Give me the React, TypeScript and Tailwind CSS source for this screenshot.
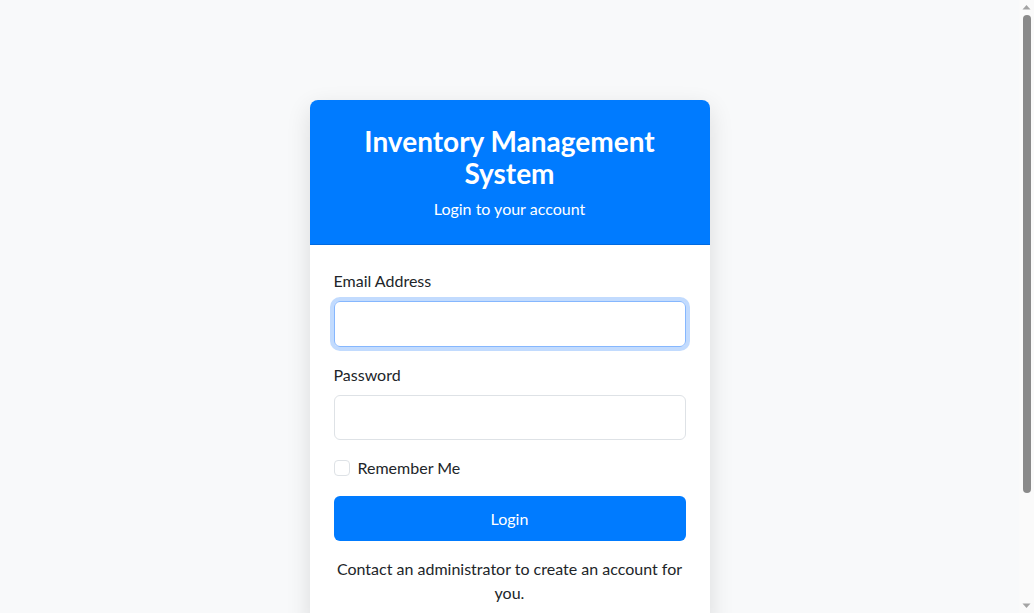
import React, { useState } from "react";

export default function App() {
  const [email, setEmail] = useState("");
  const [password, setPassword] = useState("");
  const [remember, setRemember] = useState(false);

  return (
    // window: page + classic scrollbar column
    <div className="flex h-screen w-full bg-[#f8f9fa]">
      {/* scrolling page */}
      <div className="h-full flex-1 overflow-y-auto [scrollbar-width:none]">
        <div
          className="w-full pt-[100px] pb-[106px] text-[#212529]"
          style={{ fontFamily: '"Lato", "Liberation Sans", sans-serif' }}
        >
          {/* login card */}
          <div className="mx-auto w-[400px] overflow-hidden rounded-[8px] bg-white shadow-[0_8px_24px_rgba(0,0,0,0.12)]">
            {/* header */}
            <div className="border-b border-[#006ae0] bg-[#007bff] px-6 pt-[25px] pb-[23px] text-center text-white">
              <h3 className="mb-2 text-[28px] font-bold leading-[32px]">
                Inventory Management System
              </h3>
              <p className="text-[16px] leading-6">Login to your account</p>
            </div>

            {/* form */}
            <form className="p-6" onSubmit={(e) => e.preventDefault()}>
              <label className="mb-2 block text-[16px] leading-6">Email Address</label>
              <input
                type="email"
                value={email}
                onChange={(e) => setEmail(e.target.value)}
                className="mb-4 block h-[46px] w-full rounded-[6px] border border-[#86b7fe] px-3 shadow-[0_0_0_4px_rgba(13,110,253,0.25)] outline-none"
              />

              <label className="mb-2 block text-[16px] leading-6">Password</label>
              <input
                type="password"
                value={password}
                onChange={(e) => setPassword(e.target.value)}
                className="mb-4 block h-[45px] w-full rounded-[6px] border border-[#dee2e6] px-3 outline-none"
              />

              {/* remember me */}
              <label className="mb-4 flex h-6 items-center gap-2 text-[16px]">
                <input
                  type="checkbox"
                  checked={remember}
                  onChange={(e) => setRemember(e.target.checked)}
                  className="h-4 w-4 appearance-none rounded-[4px] border border-[#dee2e6] bg-white checked:bg-[#007bff]"
                />
                Remember Me
              </label>

              <button
                type="submit"
                className="mb-4 block h-[45px] w-full rounded-[6px] bg-[#007bff] text-[16px] text-white"
              >
                Login
              </button>

              <p className="text-center text-[16px] leading-6">
                Contact an administrator to create an account for you.
              </p>
            </form>
          </div>
        </div>
      </div>

      {/* scrollbar */}
      <div className="flex h-full w-[15px] flex-col items-center bg-[#fafafa]">
        <svg width="15" height="15" viewBox="0 0 15 15" className="shrink-0">
          <path d="M3.5 9.5 L7.5 5 L11.5 9.5 Z" fill="#a3a3a3" />
        </svg>
        <div className="h-[478px] w-[8px] shrink-0 rounded-full bg-[#8a8a8a]" />
        <div className="flex-1" />
        <svg width="15" height="15" viewBox="0 0 15 15" className="shrink-0">
          <path d="M3.5 5.5 L7.5 10 L11.5 5.5 Z" fill="#a3a3a3" />
        </svg>
      </div>
    </div>
  );
}
